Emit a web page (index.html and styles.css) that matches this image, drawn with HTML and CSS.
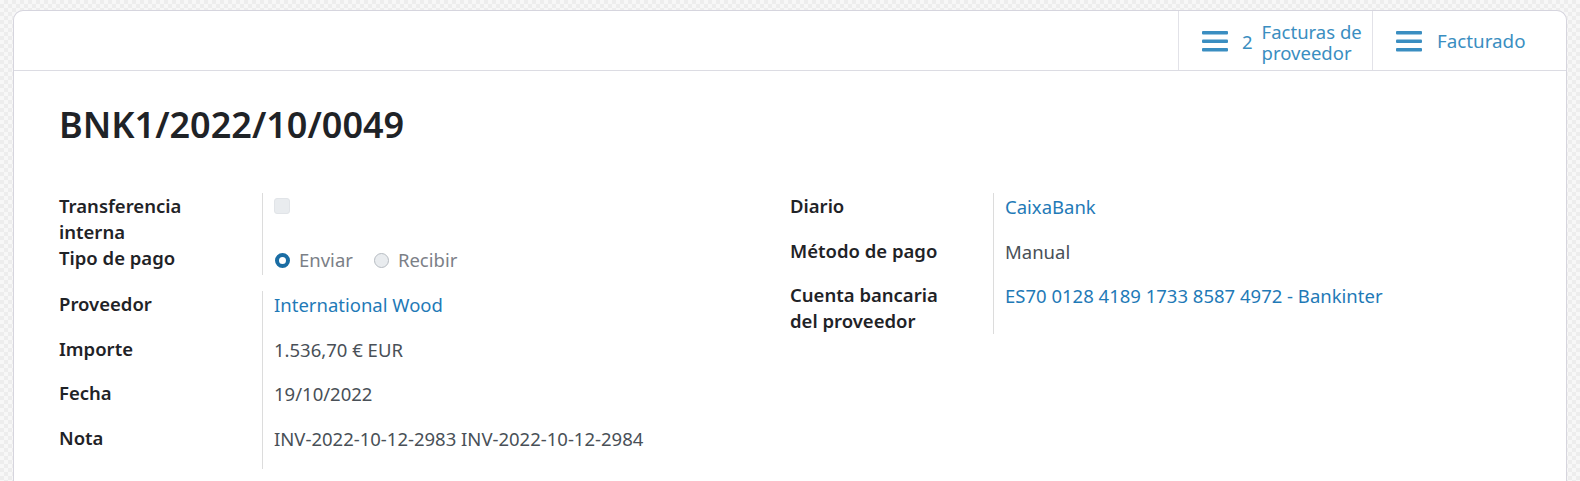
FILE: index.html
```html
<!DOCTYPE html>
<html lang="es">
<head>
<meta charset="utf-8">
<link rel="stylesheet" href="styles.css">
</head>
<body>
<div class="sheet">
  <div class="button-box">
    <div class="stat-btn">
      <svg class="bars" width="26" height="21" viewBox="0 0 26 21"><rect x="0" y="0" width="26" height="3.5" rx="1"/><rect x="0" y="8.5" width="26" height="3.5" rx="1"/><rect x="0" y="17" width="26" height="3.5" rx="1"/></svg>
      <span class="stat-value">2</span>
      <span class="stat-text">Facturas de<br>proveedor</span>
    </div>
    <div class="stat-btn">
      <svg class="bars" width="26" height="21" viewBox="0 0 26 21"><rect x="0" y="0" width="26" height="3.5" rx="1"/><rect x="0" y="8.5" width="26" height="3.5" rx="1"/><rect x="0" y="17" width="26" height="3.5" rx="1"/></svg>
      <span class="stat-text single">Facturado</span>
    </div>
  </div>
  <div class="content">
    <h1 class="title">BNK1/2022/10/0049</h1>
    <div class="groups">
      <div class="group">
        <div class="row">
          <div class="label">Transferencia interna</div>
          <div class="value"><span class="checkbox"></span></div>
        </div>
        <div class="row row-radio">
          <div class="label">Tipo de pago</div>
          <div class="value radios">
            <span class="radio checked"></span><span class="radio-label">Enviar</span>
            <span class="radio"></span><span class="radio-label">Recibir</span>
          </div>
        </div>
        <div class="row">
          <div class="label">Proveedor</div>
          <div class="value"><span class="link">International Wood</span></div>
        </div>
        <div class="row">
          <div class="label">Importe</div>
          <div class="value">1.536,70 €&nbsp;EUR</div>
        </div>
        <div class="row">
          <div class="label">Fecha</div>
          <div class="value">19/10/2022</div>
        </div>
        <div class="row">
          <div class="label">Nota</div>
          <div class="value">INV-2022-10-12-2983 INV-2022-10-12-2984</div>
        </div>
      </div>
      <div class="group">
        <div class="row">
          <div class="label">Diario</div>
          <div class="value"><span class="link">CaixaBank</span></div>
        </div>
        <div class="row">
          <div class="label">Método de pago</div>
          <div class="value">Manual</div>
        </div>
        <div class="row">
          <div class="label">Cuenta bancaria del proveedor</div>
          <div class="value"><span class="link">ES70 0128 4189 1733 8587 4972 - Bankinter</span></div>
        </div>
      </div>
    </div>
  </div>
</div>
</body>
</html>
```
FILE: styles.css
```css
html, body {
  margin: 0;
  height: 100%;
}
body {
  padding: 10px 13px 0 13px;
  box-sizing: border-box;
  overflow: hidden;
  background: repeating-conic-gradient(#ededed 0 25%, #f7f7f7 0 50%) 0 0 / 8px 8px;
  font-family: "Noto Sans", "Open Sans", sans-serif;
  font-size: 18.5px;
  color: #495057;
}
.sheet {
  background: #fff;
  border: 1px solid #d6d5de;
  border-bottom: none;
  border-radius: 10px 10px 0 0;
  min-height: 520px;
}
.button-box {
  display: flex;
  justify-content: flex-end;
  height: 59px;
  border-bottom: 1px solid #dcdce3;
}
.stat-btn {
  width: 194px;
  box-sizing: border-box;
  border-left: 1px solid #e2e2e8;
  display: flex;
  align-items: center;
  padding: 2px 0 0 23px;
  color: #3a8ec1;
  line-height: 21px;
}
.bars {
  fill: #3a8ec1;
  flex: none;
  margin-right: 14px;
}
.stat-value {
  margin-right: 9px;
}
.stat-text.single {
  margin-left: 1px;
  font-size: 18.8px;
}
.content {
  padding: 29px 45px 0 45px;
}
.title {
  margin: 0 0 44px 0;
  font-size: 36px;
  line-height: 49px;
  font-weight: 600;
  color: #1f2327;
}
.groups {
  display: grid;
  grid-template-columns: 1fr 1fr;
}
.row {
  display: grid;
  grid-template-columns: 203px 1fr;
  min-height: 44.6px;
  align-items: start;
}
.row-radio {
  min-height: 46px;
}
.label {
  font-weight: 600;
  color: #1f2327;
  line-height: 26px;
  padding-right: 40px;
  align-self: start;
}
.value {
  border-left: 1px solid #dcdcdc;
  padding-left: 11px;
  padding-top: 1px;
  line-height: 26px;
  align-self: stretch;
}
.link {
  color: #1f7ab7;
}
.checkbox {
  display: inline-block;
  width: 16px;
  height: 16px;
  margin-top: 4px;
  box-sizing: border-box;
  border: 1px solid #e1e4e8;
  border-radius: 3px;
  background: #e9ecef;
}
.radios {
  display: flex;
  align-items: center;
  height: 30px;
  padding-top: 0;
}
.radio {
  width: 15px;
  height: 15px;
  box-sizing: border-box;
  border-radius: 50%;
  border: 1px solid #b7bcc2;
  background: #e9ecef;
  flex: none;
  margin-left: 1px;
}
.radio.checked {
  border: 4.5px solid #1a6da4;
  background: #fff;
}
.radio-label {
  color: #7b8087;
  margin-left: 9px;
  margin-right: 20px;
}
```
